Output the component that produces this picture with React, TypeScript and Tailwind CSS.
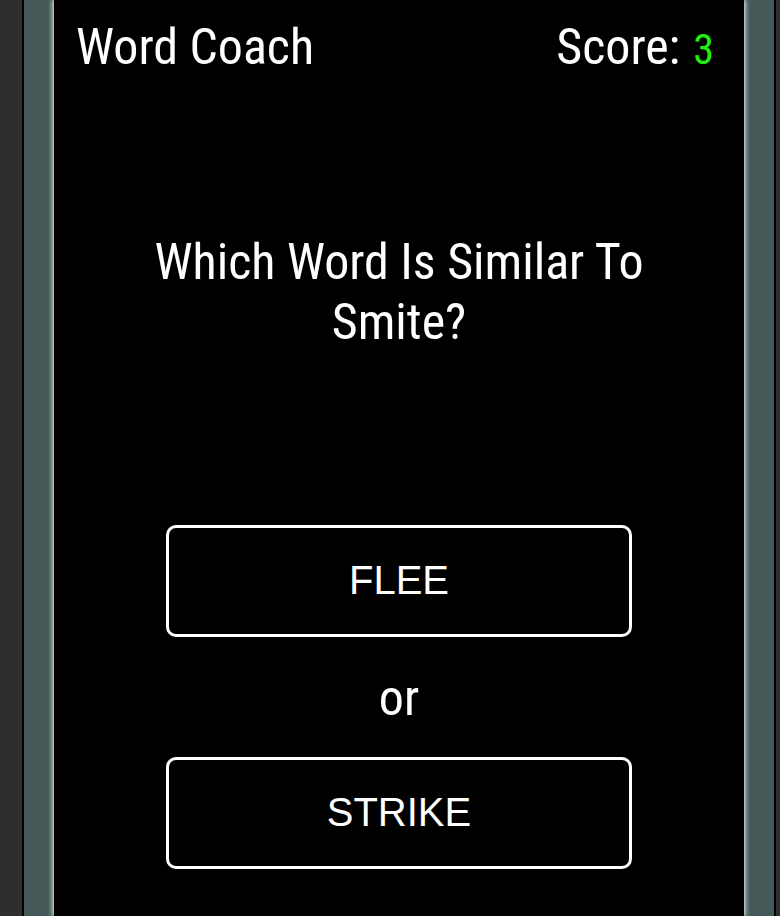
export default function App() {
  const heading = "font-['Roboto',sans-serif] [font-stretch:75%] text-[50px] leading-[60px] text-white";
  const answer =
    "flex h-[112px] w-[466px] items-center justify-center rounded-[10px] border-[3px] border-white bg-black pb-[3px] font-['Liberation_Sans',Arial,sans-serif] text-[40px] text-white";

  return (
    <div className="flex min-h-screen bg-[#2e2e2e] pl-[22px] pr-[4px]">
      <div className="flex flex-1 border-x-2 border-black bg-[#455959] px-[30px]">
        <div className="flex flex-1 flex-col bg-black shadow-[0_0_5px_1px_#ffffff]">
          <header className="flex h-[77px] items-start justify-between pl-[22px] pr-[30px] pt-[17px]">
            <h1 className={heading}>Word Coach</h1>
            <div className={`${heading} pl-2`}>
              Score:<span className="ml-[13px] text-[42px] leading-none text-[#22ee11]">3</span>
            </div>
          </header>

          <h2 className={`${heading} mx-auto mt-[155px] max-w-[520px] text-center`}>
            Which Word Is Similar To Smite?
          </h2>

          <div className="mt-[173px] flex flex-col items-center">
            <button className={answer}>FLEE</button>
            <div className={`${heading} mb-[29px] mt-[31px]`}>or</div>
            <button className={answer}>STRIKE</button>
          </div>
        </div>
      </div>
    </div>
  );
}
